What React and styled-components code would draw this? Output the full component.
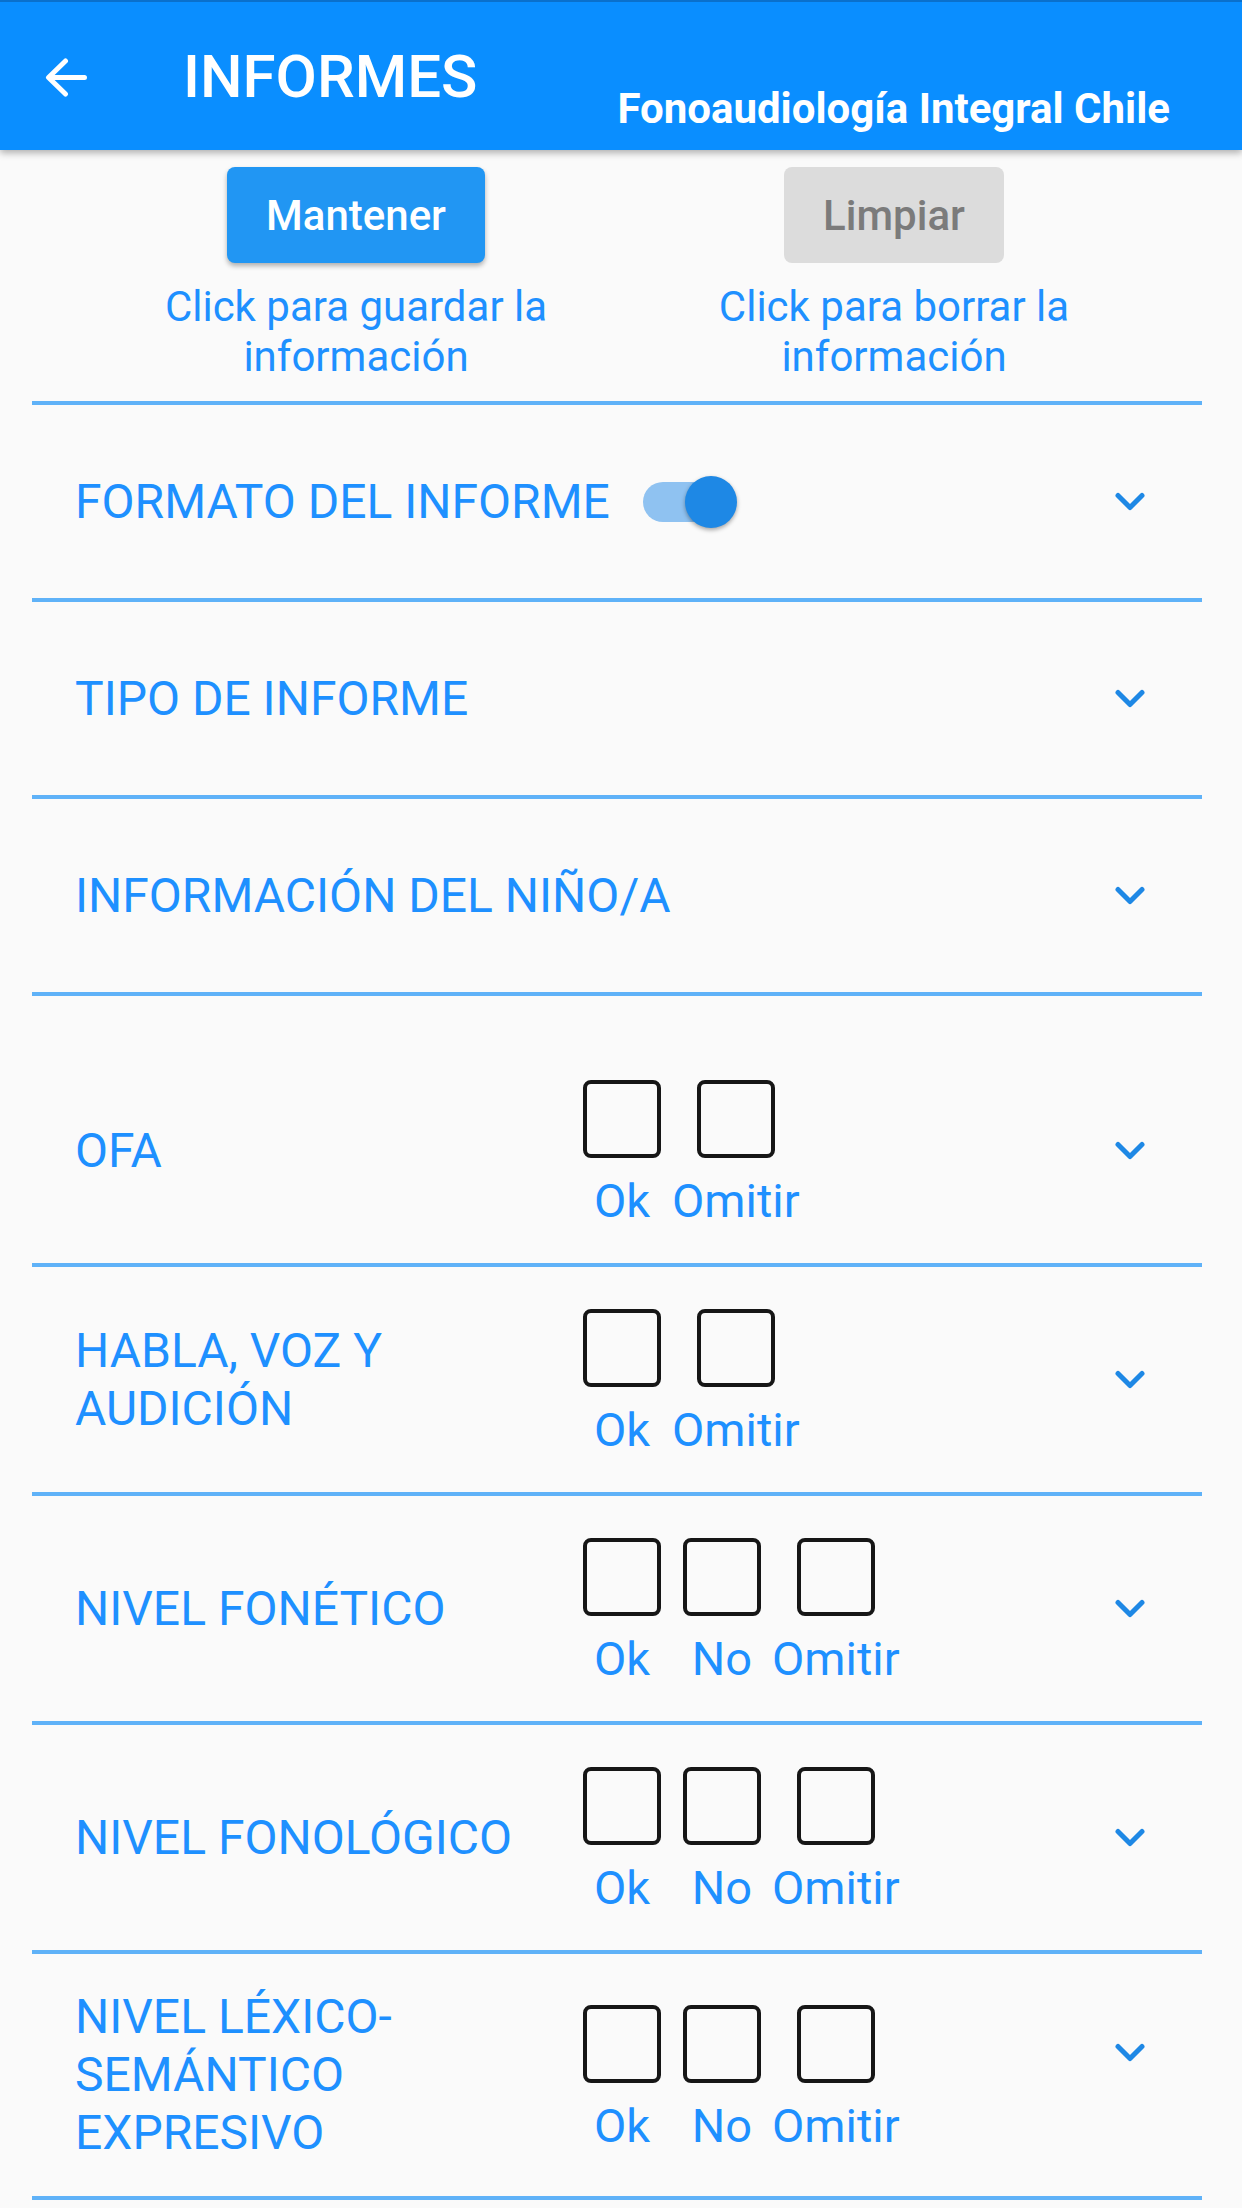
import React from "react";
import styled, { createGlobalStyle, css } from "styled-components";

const GlobalStyle = createGlobalStyle`
  * { box-sizing: border-box; }
  html, body { margin: 0; padding: 0; background: #fafafa; }
  body { font-family: Roboto, "Noto Sans", "Liberation Sans", sans-serif; }
`;

const BLUE_TEXT = "#1E90FF";
const LINE = "#5FB2F8";

const Header = styled.header`
  position: relative;
  z-index: 1;
  height: 150px;
  background: #0a8eff;
  border-top: 2px solid #0a70cc;
  display: flex;
  align-items: flex-start;
  box-shadow: 0 3px 7px rgba(0, 0, 0, 0.3);
`;

const BackButton = styled.button`
  flex: none;
  margin: 56px 0 0 45px;
  width: 42px;
  height: 39px;
  padding: 0;
  border: 0;
  background: none;
  display: flex;
`;

const HeaderTitle = styled.h1`
  margin: 40px 0 0 96px;
  font-size: 60px;
  line-height: 70px;
  font-weight: 500;
  color: #fff;
`;

const HeaderSubtitle = styled.div`
  margin: 82px 72px 0 auto;
  font-size: 42px;
  line-height: 49px;
  font-weight: 700;
  color: #fff;
`;

const Actions = styled.section`
  display: grid;
  grid-template-columns: 538px 538px;
  padding: 17px 0 0 87px;
`;

const ActionColumn = styled.div`
  display: flex;
  flex-direction: column;
  align-items: center;
`;

const ActionButton = styled.button`
  height: 96px;
  padding: 0 39px;
  border: 0;
  border-radius: 8px;
  font-family: Roboto, "Noto Sans", sans-serif;
  font-size: 42px;
  font-weight: 500;
  background: ${(p) => (p.$primary ? "#2196F3" : "#DCDCDC")};
  color: ${(p) => (p.$primary ? "#fff" : "#7b7b7b")};
  box-shadow: ${(p) => (p.$primary ? "0 3px 5px rgba(0,0,0,0.3)" : "none")};
`;

const Caption = styled.p`
  margin: 19px 0 0;
  max-width: 420px;
  text-align: center;
  font-size: 42px;
  line-height: 50px;
  color: ${BLUE_TEXT};
`;

const List = styled.div`
  margin: 19px 40px 0 32px;
`;

const Section = styled.div`
  display: flex;
  align-items: center;
  min-height: ${(p) => (p.$simple ? "197px" : "0")};
  padding-left: 43px;
  padding-top: ${(p) => p.$extraTop || 0}px;
  border-top: 4px solid ${LINE};
  &:last-child {
    border-bottom: 4px solid ${LINE};
  }
`;

const SectionTitle = styled.span`
  flex: ${(p) => (p.$fixed ? "0 0 497px" : "none")};
  padding: 34px ${(p) => (p.$fixed ? "20px" : "0")} 34px 0;
  font-size: 48px;
  line-height: 58px;
  color: ${BLUE_TEXT};
`;

const Switch = styled.span`
  position: relative;
  flex: none;
  width: 88px;
  height: 40px;
  margin-left: 33px;
  border-radius: 20px;
  background: #8fc2f1;
`;

const SwitchThumb = styled.span`
  position: absolute;
  top: -6px;
  left: 42px;
  width: 52px;
  height: 52px;
  border-radius: 50%;
  background: #1e88e5;
  box-shadow: 0 2px 4px rgba(0, 0, 0, 0.35);
`;

const Options = styled.div`
  display: flex;
  margin: 42px 0 35px;
`;

const OptionColumn = styled.label`
  display: flex;
  flex-direction: column;
  align-items: center;
  min-width: 100px;
`;

const OptionBox = styled.span`
  width: 78px;
  height: 78px;
  border: 4px solid #161616;
  border-radius: 8px;
`;

const OptionLabel = styled.span`
  margin-top: 16px;
  font-size: 47px;
  line-height: 54px;
  color: ${BLUE_TEXT};
`;

const ChevronSvg = styled.svg`
  flex: none;
  margin: 0 57px 0 auto;
  ${(p) =>
    p.$top != null &&
    css`
      align-self: flex-start;
      margin-top: ${p.$top}px;
    `}
`;

const Chevron = ({ top }) => (
  <ChevronSvg $top={top} width="30" height="20" viewBox="0 0 30 20">
    <path
      d="M3 3.5 L15 15.5 L27 3.5"
      fill="none"
      stroke="#1E88E5"
      strokeWidth="5"
      strokeLinecap="round"
      strokeLinejoin="round"
    />
  </ChevronSvg>
);

const BackArrow = () => (
  <svg width="42" height="39" viewBox="0 0 42 39">
    <path
      d="M39.5 19.5 H4 M20.5 3 L3.5 19.5 L20.5 36"
      fill="none"
      stroke="#fff"
      strokeWidth="5"
      strokeLinecap="round"
      strokeLinejoin="round"
    />
  </svg>
);

const optionSections = [
  { title: "OFA", options: ["Ok", "Omitir"], extraTop: 42 },
  { title: "HABLA, VOZ Y AUDICIÓN", options: ["Ok", "Omitir"] },
  { title: "NIVEL FONÉTICO", options: ["Ok", "No", "Omitir"] },
  { title: "NIVEL FONOLÓGICO", options: ["Ok", "No", "Omitir"] },
  {
    title: "NIVEL LÉXICO-SEMÁNTICO EXPRESIVO",
    options: ["Ok", "No", "Omitir"],
    chevronTop: 89,
  },
];

export default function App() {
  return (
    <>
      <GlobalStyle />
      <Header>
        <BackButton aria-label="Volver">
          <BackArrow />
        </BackButton>
        <HeaderTitle>INFORMES</HeaderTitle>
        <HeaderSubtitle>Fonoaudiología Integral Chile</HeaderSubtitle>
      </Header>

      <Actions>
        <ActionColumn>
          <ActionButton $primary>Mantener</ActionButton>
          <Caption>Click para guardar la información</Caption>
        </ActionColumn>
        <ActionColumn>
          <ActionButton>Limpiar</ActionButton>
          <Caption>Click para borrar la información</Caption>
        </ActionColumn>
      </Actions>

      <List>
        <Section $simple>
          <SectionTitle>FORMATO DEL INFORME</SectionTitle>
          <Switch>
            <SwitchThumb />
          </Switch>
          <Chevron />
        </Section>
        <Section $simple>
          <SectionTitle>TIPO DE INFORME</SectionTitle>
          <Chevron />
        </Section>
        <Section $simple>
          <SectionTitle>INFORMACIÓN DEL NIÑO/A</SectionTitle>
          <Chevron />
        </Section>
        {optionSections.map((s) => (
          <Section key={s.title} $extraTop={s.extraTop}>
            <SectionTitle $fixed>{s.title}</SectionTitle>
            <Options>
              {s.options.map((o) => (
                <OptionColumn key={o}>
                  <OptionBox />
                  <OptionLabel>{o}</OptionLabel>
                </OptionColumn>
              ))}
            </Options>
            <Chevron top={s.chevronTop} />
          </Section>
        ))}
      </List>
    </>
  );
}
